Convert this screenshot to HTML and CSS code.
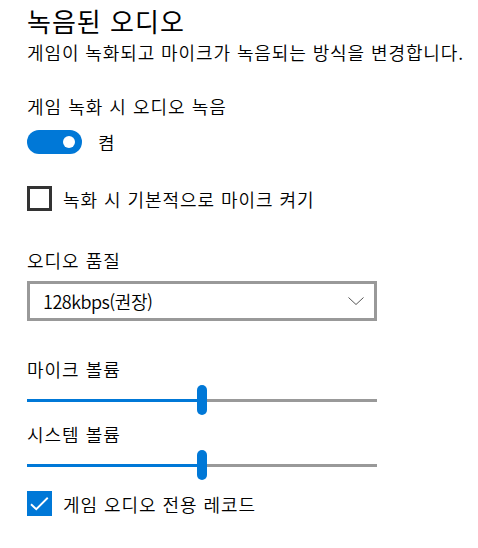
FILE: index.html
```html
<!DOCTYPE html>
<html lang="ko">
<head>
<meta charset="utf-8">
<link rel="stylesheet" href="styles.css">
</head>
<body>
<div class="page">
  <h1 class="title">녹음된 오디오</h1>
  <p class="subtitle">게임이 녹화되고 마이크가 녹음되는 방식을 변경합니다.</p>

  <div class="label label-first">게임 녹화 시 오디오 녹음</div>
  <div class="toggle-row">
    <div class="toggle"><span class="knob"></span></div>
    <span class="toggle-text">켬</span>
  </div>

  <div class="check-row check-row-first">
    <span class="checkbox"></span>
    <span class="check-text">녹화 시 기본적으로 마이크 켜기</span>
  </div>

  <div class="label label-quality">오디오 품질</div>
  <div class="select">
    <span class="select-text">128kbps(권장)</span>
    <svg class="chevron" width="16" height="8" viewBox="0 0 16 8"><path d="M0.5 0.5 L8 7.5 L15.5 0.5" fill="none" stroke="#555" stroke-width="1"/></svg>
  </div>

  <div class="label label-volume">마이크 볼륨</div>
  <div class="slider">
    <span class="track-fill" style="width:170px"></span>
    <span class="thumb"></span>
    <span class="track-rest"></span>
  </div>

  <div class="label label-volume2">시스템 볼륨</div>
  <div class="slider">
    <span class="track-fill" style="width:170px"></span>
    <span class="thumb"></span>
    <span class="track-rest"></span>
  </div>

  <div class="check-row check-row-last">
    <span class="checkbox checked">
      <svg width="25" height="25" viewBox="0 0 20 20"><path d="M3.2 10.6 L7.4 14.6 L16.6 5.4" fill="none" stroke="#fff" stroke-width="1.5"/></svg>
    </span>
    <span class="check-text">게임 오디오 전용 레코드</span>
  </div>
</div>
</body>
</html>
```

FILE: styles.css
```css
html, body {
  margin: 0;
  padding: 0;
  background: #fff;
}

body {
  font-family: "Noto Sans CJK KR", "Noto Sans", sans-serif;
  font-weight: 350;
  color: #000;
}

.page {
  padding: 5px 0 0 27px;
  display: flex;
  flex-direction: column;
  align-items: flex-start;
}

.title {
  margin: 0;
  font-size: 26px;
  line-height: 32px;
  font-weight: 400;
  letter-spacing: 1px;
}

.subtitle {
  margin: 3px 0 0;
  font-size: 18px;
  line-height: 24px;
  letter-spacing: 0.9px;
}

.label {
  font-size: 18px;
  line-height: 24px;
  letter-spacing: 1px;
}

.label-first { margin-top: 30px; }
.label-quality { margin-top: 37px; }
.label-volume { margin-top: 36px; }
.label-volume2 { margin-top: 7px; }

.toggle-row {
  margin-top: 12px;
  display: flex;
  align-items: center;
  height: 24px;
}

.toggle {
  width: 55px;
  height: 24px;
  border-radius: 12px;
  background: #0078d7;
  display: flex;
  align-items: center;
  justify-content: flex-end;
  padding-right: 7px;
  box-sizing: border-box;
}

.knob {
  width: 12px;
  height: 12px;
  border-radius: 50%;
  background: #fff;
}

.toggle-text {
  margin-left: 16px;
  font-size: 18px;
  line-height: 24px;
}

.check-row {
  display: flex;
  align-items: center;
  height: 25px;
}

.check-row-first { margin-top: 32px; }
.check-row-last { margin-top: 11px; }

.checkbox {
  width: 25px;
  height: 25px;
  box-sizing: border-box;
  border: 3px solid #333;
  background: #fff;
  display: block;
}

.checkbox.checked {
  border: none;
  background: #0078d7;
}

.checkbox svg {
  display: block;
}

.check-text {
  margin-left: 11px;
  font-size: 18px;
  line-height: 24px;
  letter-spacing: 0.95px;
}

.select {
  margin-top: 9px;
  width: 350px;
  height: 40px;
  box-sizing: border-box;
  border: 3px solid #999;
  display: flex;
  align-items: center;
  justify-content: space-between;
  padding: 0 10px 0 13px;
}

.select-text {
  font-size: 18px;
  line-height: 24px;
  letter-spacing: -0.5px;
}

.chevron {
  display: block;
}

.slider {
  margin-top: 4px;
  width: 350px;
  height: 30px;
  display: flex;
  align-items: center;
}

.track-fill {
  height: 3px;
  background: #0078d7;
  flex: none;
}

.thumb {
  flex: none;
  width: 10px;
  height: 30px;
  border-radius: 5px;
  background: #0078d7;
}

.track-rest {
  flex: 1;
  height: 3px;
  background: #999;
}
```
